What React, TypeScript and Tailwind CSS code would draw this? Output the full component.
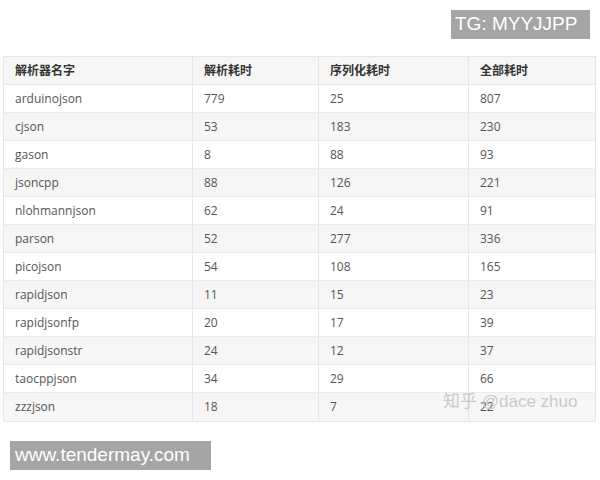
import React from 'react';

const rows: [string, number, number, number][] = [
  ['arduinojson', 779, 25, 807],
  ['cjson', 53, 183, 230],
  ['gason', 8, 88, 93],
  ['jsoncpp', 88, 126, 221],
  ['nlohmannjson', 62, 24, 91],
  ['parson', 52, 277, 336],
  ['picojson', 54, 108, 165],
  ['rapidjson', 11, 15, 23],
  ['rapidjsonfp', 20, 17, 39],
  ['rapidjsonstr', 24, 12, 37],
  ['taocppjson', 34, 29, 66],
  ['zzzjson', 18, 7, 22],
];

const grid = 'grid grid-cols-[189px_126px_150px_127px] h-[28px] items-center';
const cell = 'h-full flex items-center pl-[11px] border-r border-[#e6e6e6] last:border-r-0';

export default function App() {
  return (
    <div className="w-[600px] h-[480px] bg-white relative font-['Open_Sans','Noto_Sans_CJK_SC',sans-serif] overflow-hidden">
      <div className="flex justify-end pt-[10px] pr-[10px]">
        <div className="bg-[#a5a5a5] text-white h-[29px] w-[139px] flex items-center pl-[4px] text-[19px] font-['Liberation_Sans',sans-serif] font-light">
          TG: MYYJJPP
        </div>
      </div>

      <div className="relative ml-[3px] mt-[17px] w-[593px] border border-[#e6e6e6] text-[12px] text-[#555]">
        <div className={`${grid} bg-[#f6f6f6] border-b border-[#e6e6e6] font-bold text-[#333]`}>
          <div className={cell}>解析器名字</div>
          <div className={cell}>解析耗时</div>
          <div className={cell}>序列化耗时</div>
          <div className={cell}>全部耗时</div>
        </div>
        {rows.map((r, i) => (
          <div
            key={r[0]}
            className={`${grid} ${i % 2 === 1 ? 'bg-[#f6f6f6]' : 'bg-white'} ${i < rows.length - 1 ? 'border-b border-[#ececec]' : ''}`}
          >
            {r.map((v, j) => (
              <div key={j} className={cell}>{v}</div>
            ))}
          </div>
        ))}
        <div className="absolute left-[439px] bottom-[7px] text-[17px] text-[#c4c4c4]/90 font-['Liberation_Sans','Noto_Sans_CJK_SC',sans-serif] whitespace-nowrap">
          知乎 @dace zhuo
        </div>
      </div>

      <div className="ml-[10px] mt-[19px] bg-[#a5a5a5] text-white h-[29px] w-[201px] flex items-center pl-[5px] text-[19px] font-['Liberation_Sans',sans-serif]">
        www.tendermay.com
      </div>
    </div>
  );
}
